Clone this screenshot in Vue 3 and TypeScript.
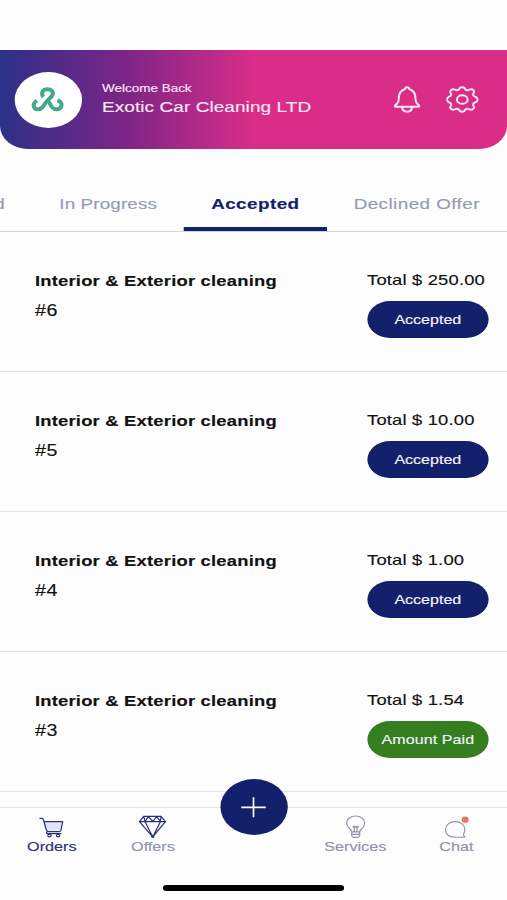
<script setup lang="ts">
import { ref } from 'vue'

interface Order {
  id: number
  title: string
  total: string
  status: 'Accepted' | 'Amount Paid'
}

const tabs = ['Created', 'In Progress', 'Accepted', 'Declined Offer']
const activeTab = ref('Accepted')

const orders: Order[] = [
  { id: 6, title: 'Interior & Exterior cleaning', total: '250.00', status: 'Accepted' },
  { id: 5, title: 'Interior & Exterior cleaning', total: '10.00', status: 'Accepted' },
  { id: 4, title: 'Interior & Exterior cleaning', total: '1.00', status: 'Accepted' },
  { id: 3, title: 'Interior & Exterior cleaning', total: '1.54', status: 'Amount Paid' },
]
</script>

<template>
  <div class="viewport">
    <div class="screen">
      <header class="header">
        <div class="avatar">
          <svg class="logo" viewBox="97 141 96 74" preserveAspectRatio="none">
            <path d="M132 171C123 160 130 148 144 148C158 148 164 158 158 167C153 175 144 180 138 189C132 200 126 208 115 208C100 208 98 190 112 182" />
            <path d="M145 183C151 188 153 196 158 202C166 211 182 210 186 199C189 191 184 184 174 181" />
          </svg>
        </div>
        <div class="greeting">
          <span class="hello">Welcome Back</span>
          <span class="company">Exotic Car Cleaning LTD</span>
        </div>
        <svg class="bell" viewBox="430 138 83 81" preserveAspectRatio="none">
          <path d="M466 147Q466 142 472 142Q478 142 478 147C491 151 497 161 497 175C497 187 501 192 508 196Q510 200 505 200H438Q433 200 436 196C443 192 447 187 447 175C447 161 453 151 466 147Z" />
          <path d="M457 202C458 211 464 215 472 215C480 215 486 211 487 202" />
        </svg>
        <svg class="gear" viewBox="588 139 99 81" preserveAspectRatio="none">
          <path d="M628 149Q629 143 637 143Q645 143 646 149Q652 154 659 150Q666 147 671 152Q675 157 670 162Q668 168 676 171Q683 173 683 179.500Q683 186 676 188Q668 191 670 197Q675 202 671 207Q666 212 659 209Q652 205 646 210Q645 216 637 216Q629 216 628 210Q622 205 615 209Q608 212 603 207Q599 202 604 197Q606 191 598 188Q592 186 592 179.500Q592 173 598 171Q606 168 604 162Q599 157 603 152Q608 147 615 150Q622 154 628 149Z" />
          <ellipse cx="637.5" cy="179.5" rx="16" ry="13" />
        </svg>
      </header>

      <nav class="tabs">
        <button
          v-for="tab in tabs"
          :key="tab"
          class="tab"
          :class="{ active: tab === activeTab }"
          @click="activeTab = tab"
        >{{ tab }}</button>
      </nav>

      <main class="orders">
        <article v-for="order in orders" :key="order.id" class="order">
          <div class="info">
            <h2 class="title">{{ order.title }}</h2>
            <span class="number">#{{ order.id }}</span>
          </div>
          <div class="side">
            <span class="total">Total $ {{ order.total }}</span>
            <span class="pill" :class="{ paid: order.status === 'Amount Paid' }">{{ order.status }}</span>
          </div>
        </article>
      </main>

      <footer class="bar">
        <div class="item current">
          <svg class="icon cart" viewBox="117 144 74 62" preserveAspectRatio="none">
            <path class="tint" d="M131 160H186L181 184H138Z" />
            <path d="M119 148H126Q129 149 130 153L139 184Q141 188 146 188H177Q182 188 183 183L188 158H132M142 188Q137 190 140 194H182" />
            <ellipse cx="148" cy="200" rx="5" ry="4" />
            <ellipse cx="174" cy="200" rx="5" ry="4" />
          </svg>
          <span>Orders</span>
        </div>
        <div class="item">
          <svg class="icon gem" viewBox="416 137 84 70" preserveAspectRatio="none">
            <path d="M432 141H484L497 157L459 203L419 157ZM419 157H497M432 141L436 156L446 142L459 156L471 142L482 156L484 141M436 157L459 203L482 157" />
            <circle class="dot" cx="459" cy="201" r="3" />
          </svg>
          <span>Offers</span>
        </div>
        <button class="add" aria-label="Add">
          <svg class="plus" viewBox="186 79 74 62" preserveAspectRatio="none">
            <path d="M186 110H260M223 80V140" />
          </svg>
        </button>
        <div class="item">
          <svg class="icon bulb" viewBox="106 137 62 70" preserveAspectRatio="none">
            <path d="M125 188C125 178 110 178 110 162C110 148 122 140 137 140C152 140 164 148 164 162C164 178 149 178 149 188ZM125 188V199Q126 204 131 204H143Q148 204 149 199V188M126 195H148M133 188V170M141 188V170M129 172Q131 177 137 172Q143 177 145 172" />
          </svg>
          <span>Services</span>
        </div>
        <div class="item">
          <svg class="icon chat" viewBox="402 141 74 68" preserveAspectRatio="none">
            <path d="M463 205H435C416 205 405 196 405 182C405 168 417 158 434 158C451 158 463 168 463 182C463 188 461 192 459 196Q459 201 463 205Z" />
            <ellipse class="badge" cx="464" cy="152" rx="10.500" ry="9.500" />
          </svg>
          <span>Chat</span>
        </div>
      </footer>
      <div class="home-indicator"></div>
    </div>
  </div>
</template>

<style>
body {
  margin: 0;
  background: #fdfdfd;
}
</style>

<style scoped>
.viewport {
  width: 507px;
  height: 900px;
  overflow: hidden;
}

/* The 414pt wide layout is stretched sideways to fill the viewport. */
.screen {
  box-sizing: border-box;
  display: flex;
  flex-direction: column;
  width: 414px;
  height: 900px;
  padding-top: 50px;
  overflow: hidden;
  transform: scaleX(1.22464);
  transform-origin: 0 0;
  background: #fdfdfd;
  color: #111;
  font-family: "Liberation Sans", Arial, sans-serif;
  font-size: 15px;
  -webkit-text-stroke: 0.15px currentColor;
}

svg {
  display: block;
  overflow: visible;
  fill: none;
  stroke-linecap: round;
  stroke-linejoin: round;
}

button {
  padding: 0;
  border: 0;
  background: none;
  font: inherit;
}

.header {
  box-sizing: border-box;
  display: flex;
  flex: none;
  align-items: center;
  height: 99px;
  padding: 0 23.3px 0 11.8px;
  border-radius: 0 0 23px 23px;
  background: linear-gradient(90deg, #2b3189 0%, #3d2e88 5%, #7d2587 25%, #d92d88 50%);
  color: #fbe6f4;
}

.avatar {
  display: grid;
  place-items: center;
  width: 55px;
  height: 56px;
  border-radius: 50%;
  background: #fff;
}

.logo {
  width: 26px;
  height: 24.6px;
  stroke: #43a88d;
  stroke-width: 12;
  stroke-linecap: butt;
}

.greeting {
  display: flex;
  flex: 1;
  flex-direction: column;
  gap: 2px;
  margin: -2px 0 0 16.5px;
}

.hello {
  font-size: 11px;
  line-height: 13px;
}

.company {
  font-size: 15.5px;
  line-height: 19px;
  letter-spacing: 0.06px;
}

.bell {
  width: 22.6px;
  height: 27px;
  margin-right: 20.5px;
  stroke: #fde6f4;
  stroke-width: 5.8;
}

.gear {
  width: 27px;
  height: 27px;
  stroke: #fde6f4;
  stroke-width: 5.8;
}

.tabs {
  box-sizing: border-box;
  display: flex;
  flex: none;
  justify-content: flex-end;
  height: 83px;
  padding-top: 26px;
  border-bottom: 1px solid #d2d2d4;
}

.tab {
  box-sizing: border-box;
  flex: none;
  height: 56px;
  padding: 6px 22.1px 0;
  border-bottom: 4px solid transparent;
  color: #959cae;
  font-size: 15.4px;
  letter-spacing: 0.36px;
}

.tab:nth-child(2) {
  letter-spacing: 0.1px;
}

.tab.active {
  border-color: #13206b;
  color: #13206b;
  font-weight: 700;
}

.orders {
  flex: none;
}

.order {
  box-sizing: border-box;
  display: flex;
  justify-content: space-between;
  height: 140px;
  padding: 39px 15px 0 28.5px;
  border-bottom: 1px solid #e2e2e4;
}

.info,
.side {
  display: flex;
  flex-direction: column;
}

.title {
  margin: 0;
  font-size: 15px;
  font-weight: 700;
  line-height: 20px;
  letter-spacing: 0.18px;
}

.number {
  margin-top: 10px;
  font-size: 16px;
  line-height: 20px;
  letter-spacing: 0.5px;
}

.side {
  width: 99.3px;
  margin-top: -1px;
}

.total {
  line-height: 20px;
  letter-spacing: 0.15px;
  white-space: nowrap;
}

.pill {
  height: 37.5px;
  margin-top: 10.5px;
  border-radius: 19px;
  background: #13206b;
  color: #f3f4fb;
  font-size: 13.1px;
  line-height: 38px;
  text-align: center;
}

.pill.paid {
  background: #347e20;
  letter-spacing: 0.08px;
}

.bar {
  display: grid;
  grid-template-columns: repeat(5, 1fr);
  flex: none;
  box-sizing: border-box;
  height: 77px;
  margin-top: 15px;
  padding-left: 1px;
  border-top: 1px solid #e2e2e4;
}

.item {
  display: flex;
  flex-direction: column;
  align-items: center;
  justify-content: flex-end;
  height: 47px;
  color: #8e94aa;
  font-size: 13.2px;
  line-height: 16px;
}

.item.current {
  color: #2c2f7c;
}

.icon {
  stroke: #8e94aa;
  stroke-width: 3.6;
}

.cart {
  width: 20px;
  height: 20.6px;
  margin-bottom: 1px;
  stroke: #2c2f7c;
}

.tint {
  fill: #dfe5f5;
  stroke: none;
}

.gem {
  width: 22.9px;
  height: 23.3px;
  margin-bottom: 0.5px;
  stroke: #2c2f7c;
}

.dot {
  fill: #2c2f7c;
}

.bulb {
  width: 16.9px;
  height: 23.3px;
  margin-bottom: 0.5px;
}

.chat {
  width: 20.1px;
  height: 22.6px;
}

.badge {
  fill: #ee735e;
  stroke: none;
}

.add {
  display: grid;
  place-items: center;
  place-self: start center;
  width: 55px;
  height: 56px;
  margin-top: -29px;
  border-radius: 50%;
  background: #13206b;
}

.plus {
  width: 20px;
  height: 20.6px;
  stroke: #fff;
  stroke-width: 5;
  stroke-linecap: butt;
}

.home-indicator {
  flex: none;
  align-self: center;
  width: 148px;
  height: 6px;
  margin-top: 1px;
  border-radius: 3px;
  background: #000;
}
</style>
